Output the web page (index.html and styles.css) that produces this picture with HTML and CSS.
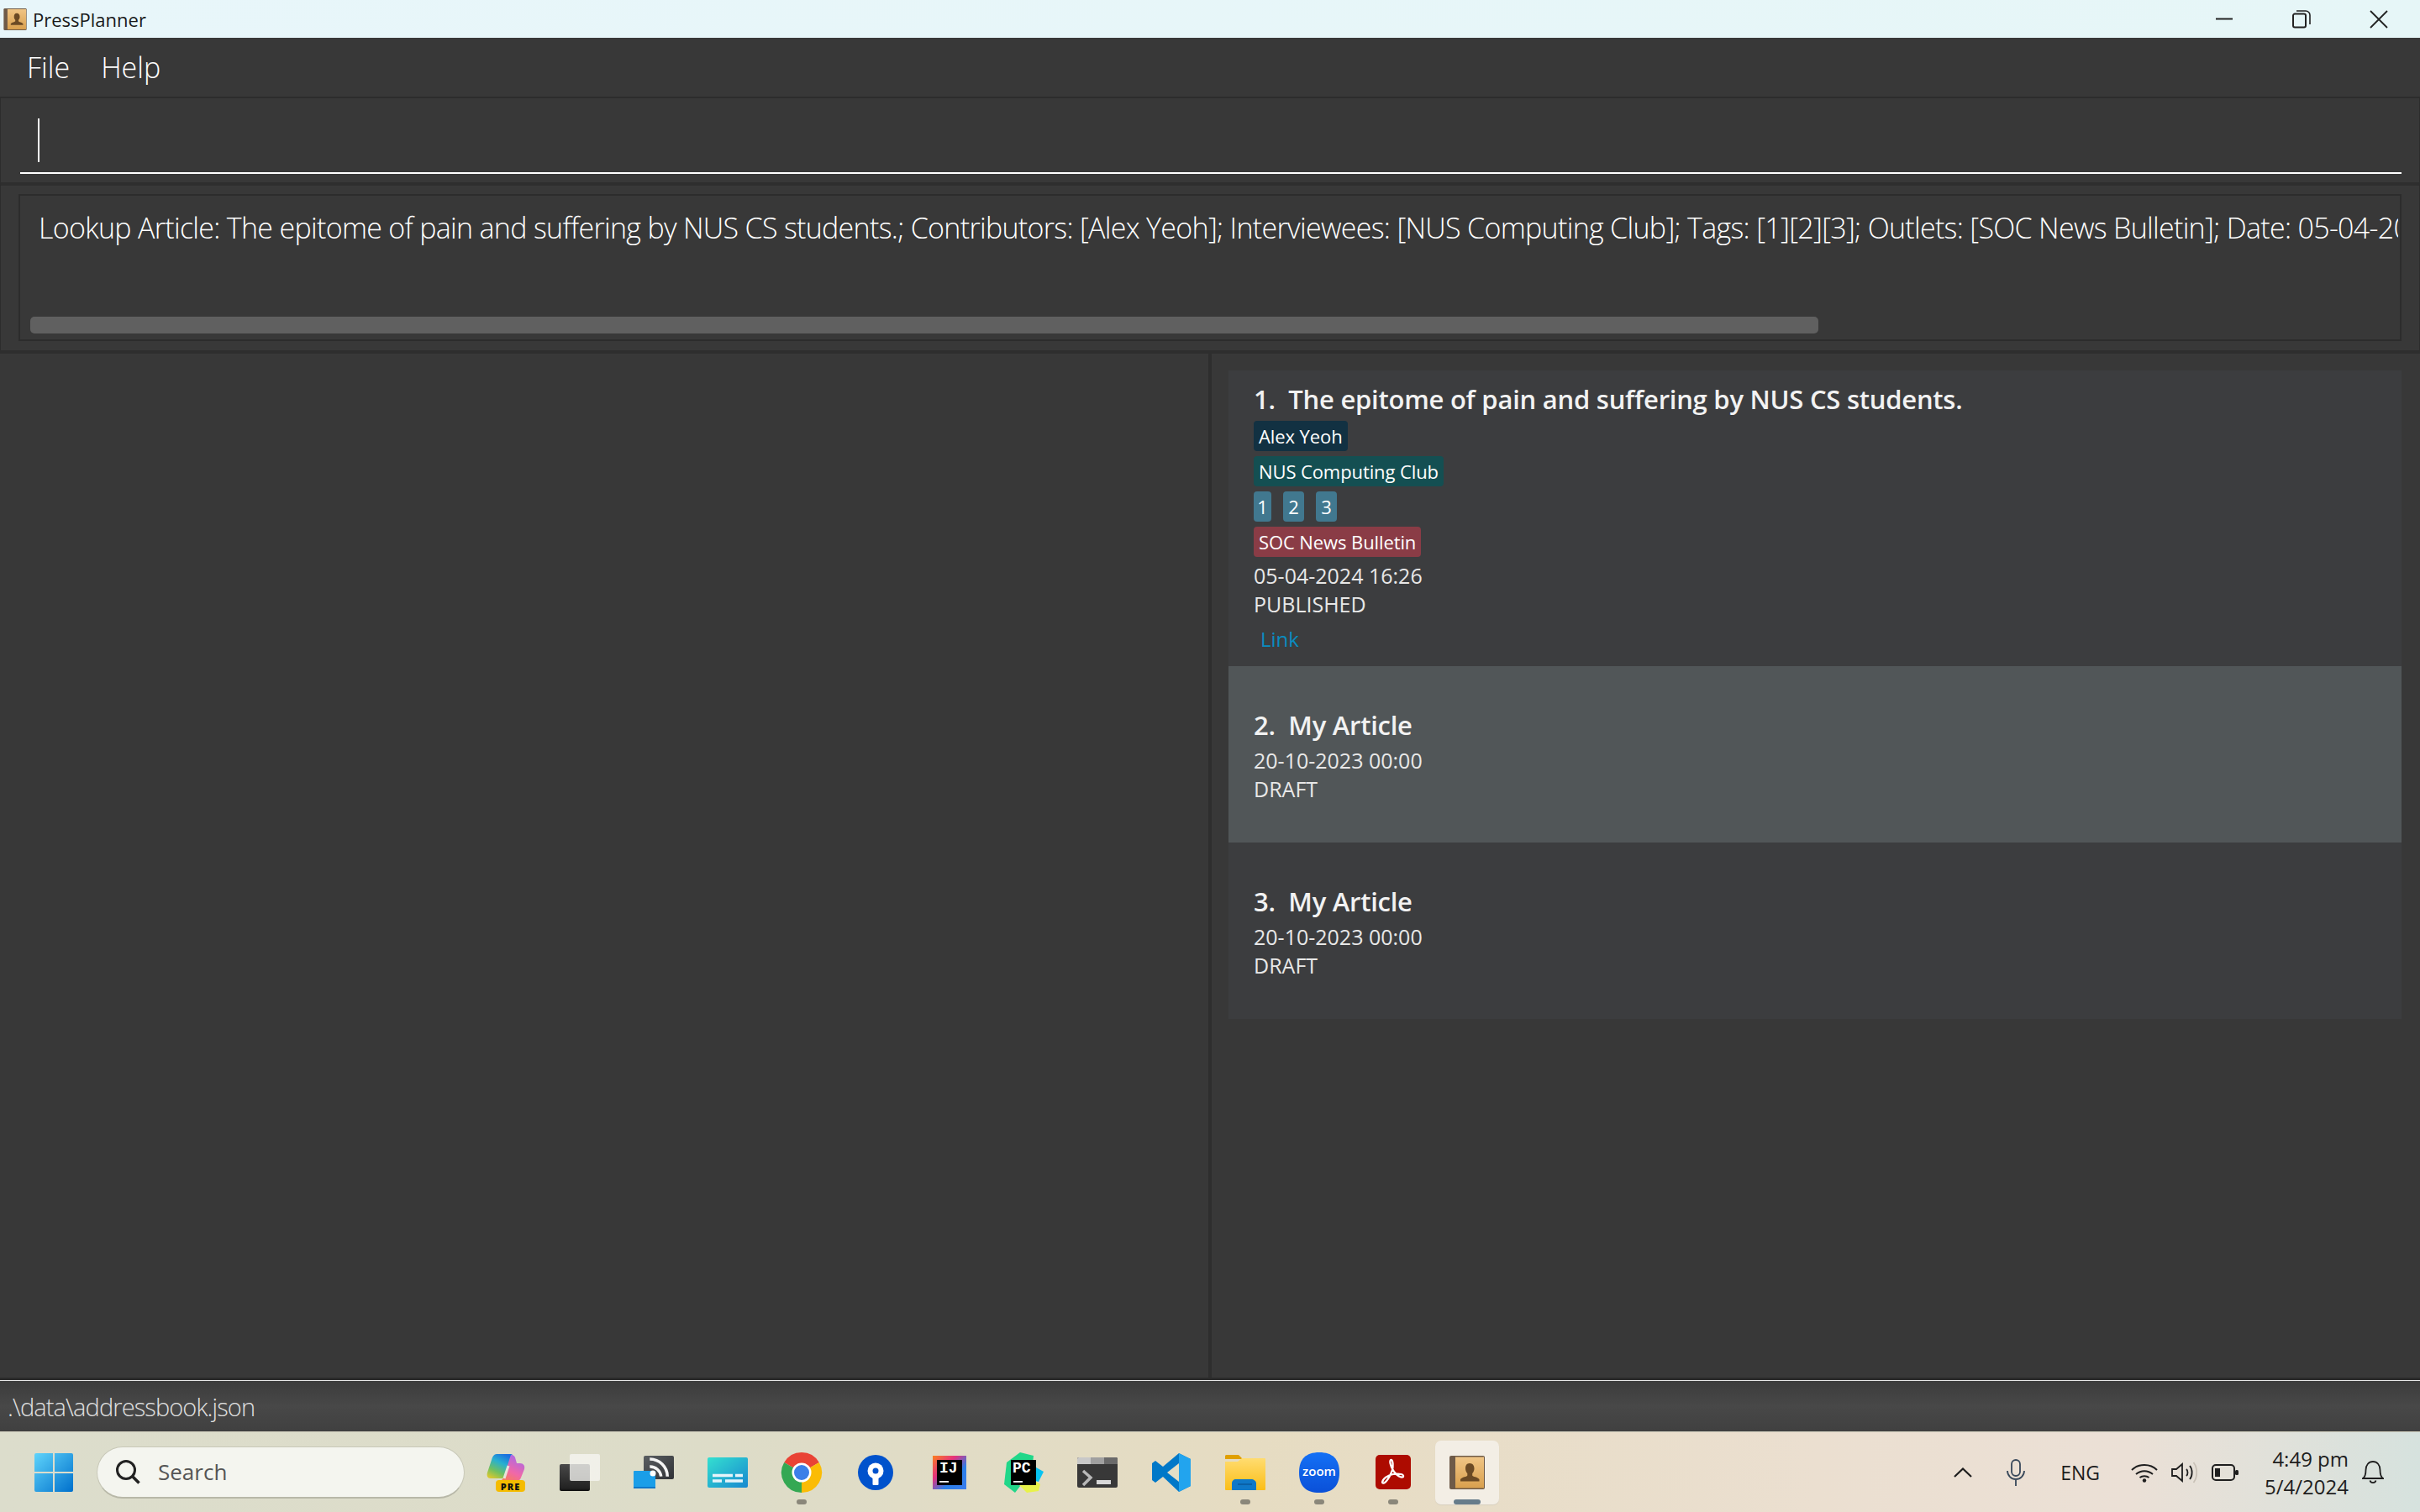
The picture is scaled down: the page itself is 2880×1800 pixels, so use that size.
FILE: index.html
```html
<!DOCTYPE html>
<html>
<head>
    <meta charset="UTF-8">
    <link rel="stylesheet" href="styles.css">
</head>
<body>
    <svg class="defs" width="0" height="0">
        <defs>
            <linearGradient id="cover" x1="0" y1="0" x2="0" y2="1">
                <stop offset="0" stop-color="#f0c585"/>
                <stop offset="1" stop-color="#d9a04e"/>
            </linearGradient>
            <symbol id="book" viewBox="0 0 42 40">
                <rect x="0" y="0" width="42" height="40" rx="2" fill="#6e5a48"/>
                <rect x="7" y="1.5" width="34" height="37" fill="url(#cover)"/>
                <path d="M24 9c3.6 0 5.5 2.8 5.5 6.2 0 2.5-1 4.5-2.3 5.8v2.4c0 1.4 6.8 2 8.3 4.6v2.5H13v-2.5c1.5-2.6 8.3-3.2 8.3-4.6V21c-1.3-1.3-2.3-3.3-2.3-5.8C19 11.8 20.4 9 24 9z" fill="#6b4a24"/>
            </symbol>
        </defs>
    </svg>

    <div class="titlebar">
        <div class="title-left">
            <svg class="title-icon"><use href="#book"/></svg>
            <span class="title-text">PressPlanner</span>
        </div>
        <div class="win-controls">
            <svg class="win-btn" viewBox="0 0 22 22"><path d="M1 10.5h20" stroke="#222" stroke-width="2"/></svg>
            <svg class="win-btn" viewBox="0 0 22 22"><path d="M1 6.5a2 2 0 0 1 2-2h11a2 2 0 0 1 2 2v12a2 2 0 0 1-2 2H3a2 2 0 0 1-2-2z" fill="none" stroke="#222" stroke-width="2"/><path d="M5 1h11a5 5 0 0 1 5 5v11" fill="none" stroke="#222" stroke-width="1.6"/></svg>
            <svg class="win-btn" viewBox="0 0 22 22"><path d="M1 1l20 20M21 1L1 21" stroke="#222" stroke-width="1.8"/></svg>
        </div>
    </div>

    <div class="menubar">
        <span class="menu-item">File</span>
        <span class="menu-item">Help</span>
    </div>

    <div class="command-pane">
        <div class="command-input"><div class="caret"></div></div>
    </div>

    <div class="result-pane">
        <div class="result-box">
            <div class="result-text">Lookup Article: The epitome of pain and suffering by NUS CS students.; Contributors: [Alex Yeoh]; Interviewees: [NUS Computing Club]; Tags: [1][2][3]; Outlets: [SOC News Bulletin]; Date: 05-04-2024 16:26</div>
            <div class="scroll-thumb"></div>
        </div>
    </div>

    <div class="main-split">
        <div class="left-pane"></div>
        <div class="article-list">
            <div class="card card-first">
                <div class="card-title">1.&nbsp; The epitome of pain and suffering by NUS CS students.</div>
                <div class="chip-row"><span class="chip chip-contrib">Alex Yeoh</span></div>
                <div class="chip-row"><span class="chip chip-interview">NUS Computing Club</span></div>
                <div class="chip-row">
                    <span class="chip chip-tag chip-tag-narrow">1</span>
                    <span class="chip chip-tag">2</span>
                    <span class="chip chip-tag">3</span>
                </div>
                <div class="chip-row chip-row-last"><span class="chip chip-outlet">SOC News Bulletin</span></div>
                <div class="card-line">05-04-2024 16:26</div>
                <div class="card-line">PUBLISHED</div>
                <div class="card-link">Link</div>
            </div>
            <div class="card card-selected">
                <div class="card-title">2.&nbsp; My Article</div>
                <div class="card-line">20-10-2023 00:00</div>
                <div class="card-line">DRAFT</div>
            </div>
            <div class="card">
                <div class="card-title">3.&nbsp; My Article</div>
                <div class="card-line">20-10-2023 00:00</div>
                <div class="card-line">DRAFT</div>
            </div>
        </div>
    </div>

    <div class="statusbar">.\data\addressbook.json</div>

    <div class="taskbar">
        <svg class="start-logo" viewBox="0 0 46 46">
            <defs>
                <linearGradient id="win" x1="0" y1="0" x2="1" y2="1">
                    <stop offset="0" stop-color="#5fd4fb"/>
                    <stop offset="1" stop-color="#0070cc"/>
                </linearGradient>
            </defs>
            <path d="M2 0h20v22H0V2a2 2 0 0 1 2-2zM24 0h20a2 2 0 0 1 2 2v20H24zM0 24h22v22H2a2 2 0 0 1-2-2zM24 24h22v20a2 2 0 0 1-2 2H24z" fill="url(#win)"/>
        </svg>

        <div class="search-pill">
            <svg class="search-icon" viewBox="0 0 30 30"><circle cx="13" cy="13" r="10.5" fill="none" stroke="#222" stroke-width="3"/><path d="M20.5 20.5l8 8" stroke="#222" stroke-width="3.5"/></svg>
            <span class="search-text">Search</span>
        </div>

        <div class="task-icons">
            <div class="task-slot">
                <svg width="46" height="46" viewBox="0 0 46 46">
                    <defs>
                        <linearGradient id="cop" x1="0.7" y1="0" x2="0.2" y2="1">
                            <stop offset="0" stop-color="#1a6fe0"/>
                            <stop offset="0.35" stop-color="#28b0d0"/>
                            <stop offset="0.7" stop-color="#70c060"/>
                            <stop offset="1" stop-color="#d8c830"/>
                        </linearGradient>
                        <linearGradient id="cop2" x1="0.7" y1="0" x2="0.2" y2="1">
                            <stop offset="0" stop-color="#a868e8"/>
                            <stop offset="0.6" stop-color="#f068a8"/>
                            <stop offset="1" stop-color="#f88050"/>
                        </linearGradient>
                    </defs>
                    <path d="M12 1h17c3 0 2 3 1 7L24 24c-1 4-3 6-7 6H5c-4 0-5-3-4-7L6 8c1-4 3-7 6-7z" fill="url(#cop)"/>
                    <path d="M29 2c3 0 4 1 5 3l2 7h4c4 0 6 3 5 7l-4 10c-1 3-3 4-6 4H14c3 0 6-2 7-5l6-20z" fill="url(#cop2)"/>
                    <path d="M26 15l-5 15" stroke="#e8e4d8" stroke-width="3"/>
                    <rect x="11" y="32" width="35" height="14" rx="4" fill="#f5bc00"/>
                    <text class="pre-text" x="28.5" y="43.5">PRE</text>
                </svg>
            </div>
            <div class="task-slot">
                <svg width="48" height="44" viewBox="0 0 48 44">
                    <defs>
                        <linearGradient id="tv-dark" x1="0" y1="0" x2="0" y2="1">
                            <stop offset="0" stop-color="#484848"/>
                            <stop offset="0.9" stop-color="#222"/>
                            <stop offset="1" stop-color="#0c0c0c"/>
                        </linearGradient>
                    </defs>
                    <rect x="0" y="12" width="36" height="32" rx="2" fill="url(#tv-dark)"/>
                    <rect x="12" y="0" width="36" height="32" rx="2" fill="#f6f6f2" fill-opacity="0.78"/>
                </svg>
            </div>
            <div class="task-slot">
                <svg width="48" height="39" viewBox="0 0 48 39">
                    <defs>
                        <linearGradient id="rss-dark" x1="0" y1="0" x2="1" y2="1">
                            <stop offset="0" stop-color="#5a5e62"/>
                            <stop offset="1" stop-color="#303236"/>
                        </linearGradient>
                    </defs>
                    <rect x="12" y="0" width="36" height="28" rx="2" fill="url(#rss-dark)"/>
                    <path d="M19.3 4A21 21 0 0 1 40.3 24.7M19.3 13A13 13 0 0 1 32.7 24.7" fill="none" stroke="#f4f4f4" stroke-width="3.5"/>
                    <rect x="0" y="18" width="26" height="21" rx="1" fill="#1a9ee8"/>
                    <rect x="0" y="37" width="26" height="2" fill="#0f78c8"/>
                    <circle cx="23" cy="21" r="3.5" fill="#fff"/>
                </svg>
            </div>
            <div class="task-slot">
                <svg width="48" height="36" viewBox="0 0 48 36">
                    <defs>
                        <linearGradient id="teal" x1="0" y1="0" x2="1" y2="1">
                            <stop offset="0" stop-color="#34e0d0"/>
                            <stop offset="1" stop-color="#1888d0"/>
                        </linearGradient>
                    </defs>
                    <rect width="48" height="36" rx="2" fill="url(#teal)"/>
                    <path d="M6 21.5h24M33 21.5h9M6 28h11M21 28h21" stroke="#e6f4fa" stroke-width="3.5"/>
                </svg>
            </div>
            <div class="task-slot has-dot">
                <svg width="48" height="48" viewBox="0 0 48 48">
                    <path d="M24 24L44.8 12A24 24 0 0 0 3.2 12z" fill="#e94335"/>
                    <path d="M24 24L3.2 12A24 24 0 0 0 24 48z" fill="#34a853"/>
                    <path d="M24 24L24 48A24 24 0 0 0 44.8 12z" fill="#fbbc05"/>
                    <circle cx="24" cy="24" r="11.5" fill="#fff"/>
                    <circle cx="24" cy="24" r="9" fill="#3b7fe8"/>
                </svg>
            </div>
            <div class="task-slot">
                <svg width="42" height="42" viewBox="0 0 42 42">
                    <circle cx="21" cy="21" r="21" fill="#0052cc"/>
                    <circle cx="21" cy="19" r="9.5" fill="#fff"/>
                    <circle cx="21" cy="19" r="3.5" fill="#0052cc"/>
                    <rect x="17.5" y="24" width="7" height="12" rx="1" fill="#fff"/>
                </svg>
            </div>
            <div class="task-slot">
                <svg width="40" height="40" viewBox="0 0 40 40">
                    <defs>
                        <linearGradient id="ij" x1="0" y1="0" x2="1" y2="1">
                            <stop offset="0" stop-color="#fc801d"/>
                            <stop offset="0.35" stop-color="#e5317e"/>
                            <stop offset="0.65" stop-color="#2b7fe8"/>
                            <stop offset="1" stop-color="#3a7df0"/>
                        </linearGradient>
                    </defs>
                    <rect width="40" height="40" fill="url(#ij)"/>
                    <rect x="5" y="5" width="30" height="30" fill="#000"/>
                    <text class="ide-text" x="8" y="20">IJ</text>
                    <rect x="8" y="30" width="11" height="1.8" fill="#fff"/>
                </svg>
            </div>
            <div class="task-slot">
                <svg width="48" height="48" viewBox="0 0 48 48">
                    <path d="M4 12L20 0l16 4-2 18L14 48 1 38z" fill="#21d789"/>
                    <path d="M32 14l16 9-6 12-8-2z" fill="#07c3f2"/>
                    <path d="M14 34h24l6 4-2 8-14 2z" fill="#e8f24a"/>
                    <rect x="9" y="9" width="30" height="30" fill="#000"/>
                    <text class="ide-text" x="11" y="24">PC</text>
                    <rect x="12" y="34" width="11" height="1.8" fill="#fff"/>
                </svg>
            </div>
            <div class="task-slot">
                <svg width="48" height="36" viewBox="0 0 48 36">
                    <rect width="48" height="36" rx="2" fill="#383838"/>
                    <path d="M2 0h14v8H0V2a2 2 0 0 1 2-2z" fill="#c8c8c8"/>
                    <rect x="16" y="0" width="16" height="8" fill="#a0a0a0"/>
                    <path d="M32 0h14a2 2 0 0 1 2 2v6H32z" fill="#6a6a6a"/>
                    <path d="M7 16l9 8-9 9" fill="none" stroke="#b8b8b8" stroke-width="3.5"/>
                    <rect x="23" y="27" width="17" height="5" fill="#d8d8d8"/>
                </svg>
            </div>
            <div class="task-slot">
                <svg width="48" height="48" viewBox="0 0 48 48">
                    <path d="M33 1l14 7v32l-14 7-19-18-9 7-4-3v-20l4-3 9 7z" fill="#0078c8"/>
                    <path d="M33 1l14 7v32l-14 7z" fill="#22a4ee"/>
                    <path d="M33 13L19 24l14 11z" fill="#e4dfc6"/>
                </svg>
            </div>
            <div class="task-slot has-dot">
                <svg width="48" height="42" viewBox="0 0 48 42">
                    <defs>
                        <linearGradient id="folder" x1="0" y1="0" x2="0" y2="1">
                            <stop offset="0" stop-color="#ffdc70"/>
                            <stop offset="1" stop-color="#fbbe18"/>
                        </linearGradient>
                    </defs>
                    <path d="M1 0h15l5 5h-21V1z" fill="#e0a000"/>
                    <path d="M0 8h15l5-4h27a1 1 0 0 1 1 1v36a1 1 0 0 1-1 1H1a1 1 0 0 1-1-1z" fill="url(#folder)"/>
                    <path d="M8 42V34c0-3 2-5 5-5h18c3 0 6 2 6 5v8z" fill="#0f78c8"/>
                    <path d="M15 35h17" stroke="#0a5a9c" stroke-width="1.5"/>
                </svg>
            </div>
            <div class="task-slot has-dot">
                <svg width="48" height="48" viewBox="0 0 48 48">
                    <defs>
                        <linearGradient id="zoomg" x1="0" y1="0" x2="0" y2="1">
                            <stop offset="0" stop-color="#1470f5"/>
                            <stop offset="1" stop-color="#0a50d8"/>
                        </linearGradient>
                    </defs>
                    <path d="M24 0c16 0 24 8 24 24s-8 24-24 24S0 40 0 24 8 0 24 0z" fill="url(#zoomg)"/>
                    <text class="zoom-text" x="24" y="28">zoom</text>
                </svg>
            </div>
            <div class="task-slot has-dot">
                <svg width="42" height="42" viewBox="0 0 42 42">
                    <rect width="42" height="41" rx="5" fill="#ad0b00"/>
                    <path d="M8 33c2 3 8-4 12-15 1-4 1-11-1-12-3-1-2 7 3 14 3 4 8 8 11 6 1-3-4-4-12-3-7 1-13 6-13 10z" fill="none" stroke="#fff" stroke-width="2.2"/>
                </svg>
            </div>
            <div class="task-slot task-active">
                <svg width="42" height="40"><use href="#book"/></svg>
            </div>
        </div>

        <div class="tray">
            <svg class="tray-chevron" viewBox="0 0 22 12"><path d="M1 11L11 1.5 21 11" fill="none" stroke="#1e1e1e" stroke-width="2.2"/></svg>
            <svg class="tray-mic" viewBox="0 0 22 32"><rect x="6" y="1" width="10" height="19" rx="5" fill="none" stroke="#38485a" stroke-width="1.8"/><path d="M1 14a10 10 0 0 0 20 0M11 24v8" fill="none" stroke="#38485a" stroke-width="1.8"/></svg>
            <span class="tray-lang">ENG</span>
            <svg class="tray-wifi" viewBox="0 0 32 24"><path d="M1 9c8-8 22-8 30 0M6 14c6-5 14-5 20 0M10.5 18c3-2.5 8-2.5 11 0" fill="none" stroke="#1e1e1e" stroke-width="2"/><circle cx="16" cy="21.5" r="2.2" fill="#1e1e1e"/></svg>
            <svg class="tray-speaker" viewBox="0 0 31 26"><path d="M1 9h5l7-6v20l-7-6H1z" fill="none" stroke="#1e1e1e" stroke-width="1.8"/><path d="M18 9c2 2 2 6 0 8M22 5c3.5 4 3.5 12 0 16" fill="none" stroke="#1e1e1e" stroke-width="1.8"/><path d="M26.5 1c5 6 5 18 0 24" fill="none" stroke="#c8c0b6" stroke-width="1.8"/></svg>
            <svg class="tray-battery" viewBox="0 0 32 20"><rect x="1" y="1" width="26" height="18" rx="4" fill="none" stroke="#1e1e1e" stroke-width="2"/><rect x="4" y="5" width="6" height="10" fill="#1e1e1e"/><rect x="28" y="7" width="4" height="6" rx="1.5" fill="#1e1e1e"/></svg>
            <div class="tray-clock">
                <span>4:49 pm</span>
                <span>5/4/2024</span>
            </div>
            <svg class="tray-bell" viewBox="0 0 26 28"><path d="M1 21c3-2 3.5-5 3.5-10C4.5 5 8 1 13 1s8.5 4 8.5 10c0 5 .5 8 3.5 10z" fill="none" stroke="#1e1e1e" stroke-width="1.8"/><path d="M9.5 23.5c1 3.5 6 3.500 7 0" fill="none" stroke="#1e1e1e" stroke-width="1.8"/></svg>
        </div>
    </div>
</body>
</html>
```

FILE: styles.css
```css
html, body {
    margin: 0;
    padding: 0;
}
body {
    width: 2880px;
    height: 1800px;
    overflow: hidden;
    display: flex;
    flex-direction: column;
    background-color: #383838;
    color: white;
    font-family: "Open Sans", "Noto Sans", sans-serif;
}
.defs {
    position: absolute;
}

/* window title */
.titlebar {
    height: 45px;
    flex: none;
    display: flex;
    justify-content: space-between;
    align-items: center;
    background: linear-gradient(90deg, #e8f6fa, #e6f6f7);
    color: #1a1a1a;
}
.title-left {
    display: flex;
    align-items: center;
}
.title-icon {
    width: 28px;
    height: 26px;
    margin-left: 4px;
}
.title-text {
    margin-left: 7px;
    font-size: 22px;
    font-weight: 400;
}
.win-controls {
    display: flex;
    padding-right: 38px;
    gap: 70px;
}
.win-btn {
    width: 22px;
    height: 22px;
}

/* menu */
.menubar {
    height: 70px;
    flex: none;
    display: flex;
    align-items: center;
    padding-left: 32px;
    gap: 37px;
}
.menu-item {
    font-size: 34px;
    font-weight: 300;
}

/* command box */
.command-pane {
    height: 102px;
    flex: none;
    box-sizing: border-box;
    border-top: 2px solid #2c2c2c;
    border-left: 1px solid #2c2c2c;
    border-right: 1px solid #2c2c2c;
    padding: 0 21px 10px 23px;
    display: flex;
    align-items: flex-end;
}
.command-input {
    flex: 1;
    height: 66px;
    border-bottom: 2px solid white;
    padding-left: 21px;
}
.caret {
    width: 2px;
    height: 52px;
    margin-top: 2px;
    background-color: white;
}

/* result box */
.result-pane {
    height: 200px;
    flex: none;
    box-sizing: border-box;
    border-top: 4px solid #2e2e2e;
    border-left: 1px solid #2c2c2c;
    border-right: 1px solid #2c2c2c;
    padding: 10px 21px 11px 21px;
}
.result-box {
    height: 100%;
    box-sizing: border-box;
    border: 2px solid #2c2c2c;
    display: flex;
    flex-direction: column;
    justify-content: space-between;
    padding: 0 2px 7px 12px;
    overflow: hidden;
}
.result-text {
    white-space: nowrap;
    overflow: hidden;
    font-size: 34px;
    font-weight: 300;
    letter-spacing: -0.7px;
    line-height: 50px;
    margin-top: 13px;
    padding-left: 10px;
}
.scroll-thumb {
    width: 2128px;
    height: 20px;
    flex: none;
    background-color: #606060;
    border-radius: 5px;
}

/* split */
.main-split {
    flex: 1;
    min-height: 0;
    display: grid;
    grid-template-columns: 1438px 1fr;
    border-top: 4px solid #2e2e2e;
    border-bottom: 3px solid #2b2b2b;
}
.left-pane {
    border-right: 4px solid #2e2e2e;
    box-sizing: content-box;
    width: 1438px;
}
.article-list {
    padding: 20px 22px 0 20px;
    margin-left: 4px;
}
.card {
    height: 210px;
    box-sizing: border-box;
    padding: 48px 0 0 30px;
    background-color: #3c3d3f;
}
.card-first {
    height: 352px;
    padding-top: 12px;
}
.card-first .card-title {
    margin-bottom: 4px;
}
.card-selected {
    background-color: #515658;
}
.card-title {
    font-size: 31px;
    font-weight: 600;
    letter-spacing: -0.25px;
    line-height: 44px;
    color: #f2f2f2;
    margin-bottom: 3px;
}
.chip-row {
    height: 36px;
    margin-bottom: 6px;
    display: flex;
    gap: 14px;
}
.chip-row-last {
    margin-bottom: 5px;
}
.chip {
    padding: 0 6px;
    font-size: 22px;
    font-weight: 400;
    letter-spacing: -0.1px;
    line-height: 36px;
    border-radius: 4px;
    color: white;
}
.chip-contrib {
    background-color: #123142;
}
.chip-interview {
    background-color: #144f52;
}
.chip-tag {
    width: 25px;
    padding: 0;
    text-align: center;
    background-color: #41788f;
}
.chip-tag-narrow {
    width: 21px;
}
.chip-outlet {
    background-color: #8a3c46;
}
.card-line {
    font-size: 25px;
    font-weight: 400;
    line-height: 34px;
    color: #e8e8e8;
}
.card-link {
    font-size: 24px;
    line-height: 34px;
    color: #0a8cc0;
    margin-top: 8px;
    padding-left: 8px;
}

/* status */
.statusbar {
    height: 61px;
    flex: none;
    box-sizing: border-box;
    border-top: 1px solid #e8e8e8;
    padding-left: 9px;
    display: flex;
    align-items: center;
    background: linear-gradient(180deg, #3c3c3c, #484848 50%, #404040);
    font-size: 29px;
    font-weight: 300;
    letter-spacing: -0.9px;
    color: #e0e0e0;
}

/* windows taskbar */
.taskbar {
    height: 95px;
    flex: none;
    display: flex;
    align-items: center;
    border-top: 1px solid #cfcdbd;
    box-sizing: content-box;
    background: linear-gradient(90deg, #dcddcc 0%, #dddcc8 30%, #e6dcc2 52%, #ebdfd0 75%, #ebe0d6 88%, #d6e2de 100%);
    color: #1e1e1e;
}
.start-logo {
    width: 46px;
    height: 46px;
    margin-left: 41px;
}
.search-pill {
    width: 438px;
    height: 62px;
    margin-left: 28px;
    box-sizing: border-box;
    border: 1px solid #c8c8b8;
    border-bottom: 2px solid #b8b8a8;
    border-radius: 31px;
    background-color: #f4f5ef;
    display: flex;
    align-items: center;
    padding-left: 21px;
}
.search-icon {
    width: 30px;
    height: 30px;
}
.search-text {
    margin-left: 21px;
    font-size: 26px;
    color: #555;
}
.task-icons {
    display: flex;
    margin-left: 5px;
}
.task-slot {
    width: 88px;
    height: 76px;
    display: flex;
    align-items: center;
    justify-content: center;
    position: relative;
}
.task-slot svg {
    overflow: visible;
}
.has-dot::after {
    content: "";
    position: absolute;
    bottom: 0;
    left: 38px;
    width: 12px;
    height: 6px;
    border-radius: 3px;
    background-color: #8a877a;
}
.task-active::before {
    content: "";
    position: absolute;
    left: 6px;
    top: 0;
    width: 76px;
    height: 76px;
    border-radius: 7px;
    background-color: #f3eee5;
    box-shadow: 0 1px 1px #d8d0c0;
}
.task-active svg {
    position: relative;
}
.task-active::after {
    content: "";
    position: absolute;
    bottom: 0;
    left: 28px;
    width: 32px;
    height: 6px;
    border-radius: 3px;
    background-color: #667c8a;
}
.pre-text {
    font-size: 11px;
    font-weight: 800;
    letter-spacing: 1px;
    fill: #111;
    text-anchor: middle;
    font-family: "Open Sans", sans-serif;
}
.ide-text {
    font-size: 18px;
    font-weight: 700;
    fill: #fff;
    font-family: "Liberation Mono", monospace;
}
.zoom-text {
    font-size: 15px;
    font-weight: 600;
    fill: #fff;
    text-anchor: middle;
    font-family: "Open Sans", sans-serif;
}
.tray {
    margin-left: auto;
    padding-right: 43px;
    display: flex;
    align-items: center;
}
.tray-chevron {
    width: 22px;
    height: 12px;
}
.tray-mic {
    width: 22px;
    height: 32px;
    margin-left: 41px;
}
.tray-lang {
    margin-left: 42px;
    font-size: 23px;
}
.tray-wifi {
    width: 32px;
    height: 24px;
    margin-left: 37px;
}
.tray-speaker {
    width: 31px;
    height: 26px;
    margin-left: 16px;
}
.tray-battery {
    width: 32px;
    height: 20px;
    margin-left: 17px;
}
.tray-clock {
    display: flex;
    flex-direction: column;
    align-items: flex-end;
    width: 114px;
    margin-left: 17px;
    font-size: 24px;
    line-height: 33px;
}
.tray-bell {
    width: 26px;
    height: 28px;
    margin-left: 16px;
}
```
